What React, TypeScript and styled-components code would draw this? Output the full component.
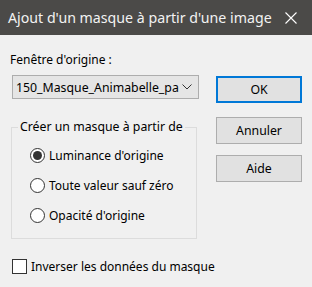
import React, { useState } from "react";
import styled, { createGlobalStyle } from "styled-components";

const GlobalStyle = createGlobalStyle`
  html, body {
    margin: 0;
    padding: 0;
    background: #f0f0f0;
  }
  body {
    font-family: "Noto Sans", "Liberation Sans", sans-serif;
    font-size: 12px;
    color: #000;
  }
`;

const Dialog = styled.div`
  width: 312px;
  height: 287px;
  background: #f0f0f0;
  overflow: hidden;
`;

const TitleBar = styled.div`
  height: 35px;
  background: #4b4a48;
  display: flex;
  align-items: center;
  justify-content: space-between;
  padding: 0 15px 0 8px;
  box-sizing: border-box;
`;

const Title = styled.div`
  color: #f2f2f2;
  font-size: 14.2px;
  white-space: nowrap;
`;

const CloseButton = styled.div`
  width: 12px;
  height: 12px;
  display: flex;
`;

const Body = styled.div`
  display: flex;
  padding: 17px 10px 0 10px;
`;

const LeftColumn = styled.div`
  width: 189px;
  display: flex;
  flex-direction: column;
`;

const RightColumn = styled.div`
  margin-left: auto;
  padding-top: 24px;
  display: flex;
  flex-direction: column;
`;

const Label = styled.div`
  line-height: 16px;
  white-space: nowrap;
`;

const Select = styled.div`
  margin: 7px 0 0 2px;
  width: 187px;
  height: 24px;
  box-sizing: border-box;
  border: 1px solid #adadad;
  background: #e5e5e5;
  display: flex;
  align-items: center;
  padding: 0 6px 0 3px;
`;

const SelectText = styled.div`
  flex: 1;
  overflow: hidden;
  white-space: nowrap;
  font-size: 12.3px;
`;

const Group = styled.fieldset`
  margin: 20px 0 0 1px;
  width: 186px;
  height: 120px;
  box-sizing: border-box;
  border: 1px solid #dcdcdc;
  padding: 12px 0 0 18px;
  display: flex;
  flex-direction: column;
  gap: 14px;
`;

const Legend = styled.legend`
  padding: 0 2px;
  margin-left: -12px;
  line-height: 16px;
  font-size: 12.3px;
  white-space: nowrap;
`;

const OptionRow = styled.label`
  display: flex;
  align-items: center;
  gap: 4px;
  height: 16px;
  white-space: nowrap;
`;

const Radio = styled.span<{ $checked?: boolean }>`
  width: 15px;
  height: 15px;
  box-sizing: border-box;
  border-radius: 50%;
  border: 1px solid #333;
  background: #fff;
  display: flex;
  align-items: center;
  justify-content: center;
  &::after {
    content: "";
    width: 9px;
    height: 9px;
    border-radius: 50%;
    background: #333;
    display: ${(p) => (p.$checked ? "block" : "none")};
  }
`;

const CheckRow = styled.label`
  display: flex;
  align-items: center;
  gap: 4px;
  margin: 19px 0 0 2px;
  white-space: nowrap;
`;

const CheckBox = styled.span`
  width: 15px;
  height: 15px;
  flex-shrink: 0;
  box-sizing: border-box;
  border: 1px solid #333;
  background: #fff;
`;

const Button = styled.div<{ $primary?: boolean }>`
  width: 86px;
  height: 27px;
  box-sizing: border-box;
  display: flex;
  align-items: center;
  justify-content: center;
  background: #e1e1e1;
  border: ${(p) => (p.$primary ? "2px solid #0078d7" : "1px solid #adadad")};
  font-size: 12.3px;
  margin-bottom: ${(p) => (p.$primary ? "14px" : "11px")};
`;

const options = ["Luminance d'origine", "Toute valeur sauf zéro", "Opacité d'origine"];

export default function App() {
  const [selected, setSelected] = useState(0);
  return (
    <Dialog>
      <GlobalStyle />
      <TitleBar>
        <Title>Ajout d'un masque à partir d'une image</Title>
        <CloseButton>
          <svg width="12" height="12" viewBox="0 0 12 12">
            <path d="M0.5 0.5 L11.5 11.5 M11.5 0.5 L0.5 11.5" stroke="#fff" strokeWidth="1.1" />
          </svg>
        </CloseButton>
      </TitleBar>
      <Body>
        <LeftColumn>
          <Label>Fenêtre d'origine :</Label>
          <Select>
            <SelectText>150_Masque_Animabelle_pa</SelectText>
            <svg width="10" height="6" viewBox="0 0 10 6">
              <path d="M0.5 0.5 L5 5 L9.5 0.5" stroke="#333" fill="none" strokeWidth="1" />
            </svg>
          </Select>
          <Group>
            <Legend>Créer un masque à partir de</Legend>
            {options.map((o, i) => (
              <OptionRow key={o} onClick={() => setSelected(i)}>
                <Radio $checked={selected === i} />
                {o}
              </OptionRow>
            ))}
          </Group>
          <CheckRow>
            <CheckBox />
            Inverser les données du masque
          </CheckRow>
        </LeftColumn>
        <RightColumn>
          <Button $primary>OK</Button>
          <Button>Annuler</Button>
          <Button>Aide</Button>
        </RightColumn>
      </Body>
    </Dialog>
  );
}
